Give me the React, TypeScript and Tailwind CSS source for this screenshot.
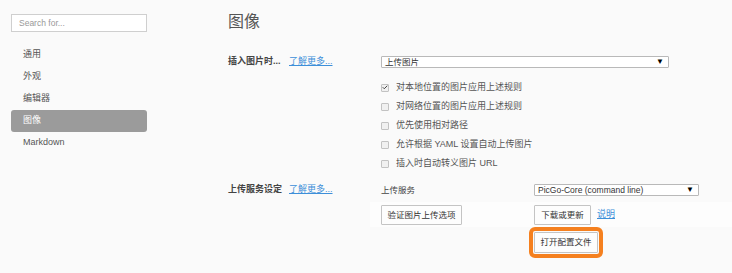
import { Check } from 'lucide-react';

const cjk = '"Liberation Sans", "Noto Sans CJK SC", sans-serif';

const navItems = ['通用', '外观', '编辑器', '图像', 'Markdown'];

const checks = [
  { label: '对本地位置的图片应用上述规则', on: true },
  { label: '对网络位置的图片应用上述规则', on: false },
  { label: '优先使用相对路径', on: false },
  { label: '允许根据 YAML 设置自动上传图片', on: false },
  { label: '插入时自动转义图片 URL', on: false },
];

function Select({ value, width }: { value: string; width: string }) {
  return (
    <div
      className={`${width} h-[12px] flex items-center justify-between bg-white border border-[#b9b9b9] rounded-[1px] pl-[3px] pr-[4px] text-[8.5px] leading-none text-[#333]`}
    >
      <span>{value}</span>
      <span className="text-[8px] text-black">▼</span>
    </div>
  );
}

function Button({ children, className = '' }: { children: string; className?: string }) {
  return (
    <button
      className={`h-[20px] flex items-center justify-center bg-[#fdfdfd] border border-[#c4c4c4] rounded-[1px] text-[8.5px] text-[#333] ${className}`}
    >
      {children}
    </button>
  );
}

export default function App() {
  return (
    <div className="w-[732px] h-[273px] bg-[#fafafa] flex overflow-hidden" style={{ fontFamily: cjk }}>
      {/* Sidebar */}
      <aside className="w-[158px] shrink-0 pl-[11px] pt-[14px]">
        <div className="w-[136px] h-[18px] bg-white border border-[#cfcfcf] flex items-center px-[7px] text-[8.5px] text-[#999]">
          Search for...
        </div>
        <nav className="mt-[12px] w-[136px] flex flex-col">
          {navItems.map((item) => (
            <div
              key={item}
              className={`h-[22px] flex items-center pl-[12px] rounded-[3px] text-[9px] ${item === '图像' ? 'bg-[#9b9b9b] text-white' : 'text-[#555]'}`}
            >
              {item}
            </div>
          ))}
        </nav>
      </aside>

      {/* Main */}
      <main className="flex-1 pl-[70px] pt-[10px]">
        <h1 className="text-[16px] leading-[24px] text-[#555]">图像</h1>

        {/* Insert images */}
        <section className="mt-[22px] flex">
          <div className="w-[153px] h-[12px] flex items-center text-[9px]">
            <span className="w-[61px] font-bold text-[#444]">插入图片时...</span>
            <a className="text-[#3d8fd9] underline">了解更多...</a>
          </div>
          <div className="flex flex-col">
            <Select value="上传图片" width="w-[288px]" />
            <div className="mt-[10px] flex flex-col">
              {checks.map((c) => (
                <label key={c.label} className="h-[19px] flex items-center gap-[7px] text-[9px] text-[#555]">
                  <span className="w-[8px] h-[8px] flex items-center justify-center rounded-[1px] border border-[#c2c2c2] bg-[#f0f0f0]">
                    {c.on && <Check className="w-[7px] h-[7px] text-[#444]" strokeWidth={4} />}
                  </span>
                  {c.label}
                </label>
              ))}
            </div>
          </div>
        </section>

        {/* Upload service */}
        <section className="mt-[11px] flex">
          <div className="w-[153px] h-[12px] flex items-center text-[9px]">
            <span className="w-[61px] font-bold text-[#444]">上传服务设定</span>
            <a className="text-[#3d8fd9] underline">了解更多...</a>
          </div>
          <div className="flex flex-col">
            <div className="flex items-center h-[12px]">
              <span className="w-[153px] text-[8.5px] text-[#444]">上传服务</span>
              <Select value="PicGo-Core (command line)" width="w-[165px]" />
            </div>
            <div className="mt-[6px] -ml-[11px] pl-[11px] pt-[3px] pb-[2px] w-[370px] flex items-center bg-[#fdfdfd]">
              <div className="w-[153px]">
                <Button className="w-[81px]">验证图片上传选项</Button>
              </div>
              <Button className="w-[57px]">下载或更新</Button>
              <a className="ml-[6px] text-[9px] text-[#3d8fd9] underline">说明</a>
            </div>
            <div className="mt-[5px] pl-[153px]">
              <Button className="w-[64px] h-[21px] outline-[4px] outline-solid outline-[#f5801f] outline-offset-[1px]">
                打开配置文件
              </Button>
            </div>
          </div>
        </section>
      </main>
    </div>
  );
}
